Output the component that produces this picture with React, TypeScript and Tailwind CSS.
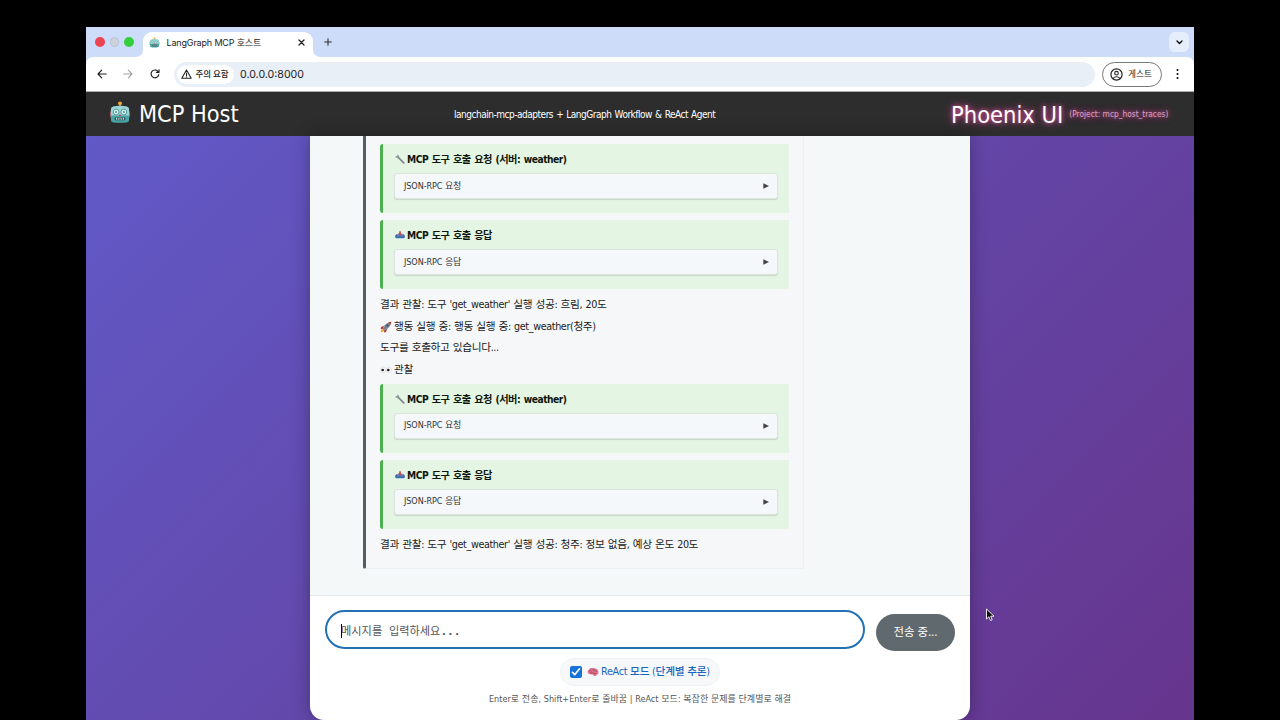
import React from "react";

const stroke = { fill: "none", stroke: "currentColor", strokeLinecap: "round", strokeLinejoin: "round" } as const;

function Robot({ className }: { className: string }) {
  return (
    <svg viewBox="0 0 22 24" className={className}>
      <path d="M11 3v4" stroke="#c49b45" strokeWidth="1.6" />
      <circle cx="11" cy="2.4" r="2" fill="#f0a93c" />
      <rect x="0.5" y="11" width="3" height="6" rx="1.2" fill="#a8525c" />
      <rect x="18.5" y="11" width="3" height="6" rx="1.2" fill="#a8525c" />
      <path d="M3.5 6Q11 4 18.5 6Q20.500 6.500 20.500 9v10.500Q20.500 22 18 22.400Q11 23.200 4 22.400Q1.500 22 1.500 19.500V9Q1.500 6.500 3.500 6Z" fill="#4aa3a4" />
      <path d="M3.500 6Q11 4 18.500 6Q20.500 6.500 20.500 9v6h-19V9Q1.500 6.500 3.500 6Z" fill="#9ad4d3" />
      <circle cx="7" cy="11.500" r="3" fill="#d3f3f1" stroke="#4a8d92" strokeWidth="0.900" />
      <circle cx="15" cy="11.500" r="3" fill="#d3f3f1" stroke="#4a8d92" strokeWidth="0.900" />
      <circle cx="7" cy="11.500" r="1.100" fill="#4b9a9c" />
      <circle cx="15" cy="11.500" r="1.100" fill="#4b9a9c" />
      <path d="M11 13.500l1.300 2.200H9.700Z" fill="#bd3f43" />
      <rect x="5.500" y="17" width="11" height="3" rx="1" fill="#244e55" />
      <path d="M7.500 17.300v2.400M9.800 17.300v2.400M12.200 17.300v2.400M14.500 17.300v2.400" stroke="#dff2ef" strokeWidth="1" />
    </svg>
  );
}

function Wrench() {
  return (
    <svg viewBox="0 0 10 10" className="mb-px size-[10px]">
      <path d="M3.300 3.300L8.700 8.900" stroke="#7f8a8c" strokeWidth="1.700" strokeLinecap="round" />
      <path d="M2.700 0.700L1.900 2.200L0.500 1.900Q0.400 3.800 2.200 4.200Q4.200 4 4.200 2.400Q4 1 2.700 0.700Z" fill="#8d9799" />
    </svg>
  );
}

function Inbox() {
  return (
    <svg viewBox="0 0 10 10" className="mb-px size-[10px]">
      <path d="M1.400 4.200h7.200L9.800 5.600v1.700Q9.800 8.300 8.600 8.300H1.400Q0.200 8.300 0.200 7.300V5.600Z" fill="#3f6fb0" />
      <path d="M1.400 4.500h7.200L7 5.800H3Z" fill="#7399cd" />
      <path d="M4.200 1.200h1.600v2.200h1.500L5 6L2.700 3.400h1.500Z" fill="#c9414c" />
    </svg>
  );
}

function Rocket() {
  return (
    <svg viewBox="0 0 12 12" className="mb-px size-[12px]">
      <path d="M0.800 11.200Q0.900 8.500 3 8l1.200 1.200Q3.500 11 0.800 11.200Z" fill="#f39a32" />
      <path d="M3.800 4.800L1.200 6L0.600 8.200L3 7.800ZM7.200 8L6 11L4 11.500L4.300 9Z" fill="#b8322f" />
      <path d="M2.600 7.800Q4.300 2 11.300 0.700Q10.200 7.600 4.100 9.500Z" fill="#7d8592" />
      <path d="M8.300 1.700Q9.800 0.900 11.300 0.700Q11 2.200 10.300 3.700Z" fill="#c43b35" />
      <circle cx="7.400" cy="4.500" r="1.100" fill="#30465d" />
    </svg>
  );
}

function Eyes() {
  return (
    <svg viewBox="0 0 12 12" className="size-[12px]">
      <ellipse cx="3.100" cy="6" rx="2.400" ry="3" fill="#fff" stroke="#d0cfcf" strokeWidth="0.600" />
      <ellipse cx="8.900" cy="6" rx="2.400" ry="3" fill="#fff" stroke="#d0cfcf" strokeWidth="0.600" />
      <circle cx="2.700" cy="6" r="1.350" fill="#222" />
      <circle cx="8.300" cy="6" r="1.350" fill="#222" />
    </svg>
  );
}

function Brain() {
  return (
    <svg viewBox="0 0 12 12" className="size-[12px]">
      <path d="M0.700 6.600Q0.300 4.400 2 3.400Q3.200 1.800 5.300 2.200Q7.500 1.500 9 2.800Q11.200 3.500 11.400 5.600Q12 8 9.800 8.800Q9 10.300 7.300 9.900Q6.300 9.600 5.700 8.500Q1.500 9 0.700 6.600Z" fill="#d9708c" />
      <path d="M2 5.500Q3.400 3.700 4.600 4.900M5.300 3.300Q7.200 3 7.300 4.700Q9.400 4.500 9.700 6M3 7.200Q5 5.800 6.600 7.200Q8 8 9.300 7.400" fill="none" stroke="#a5395b" strokeWidth="0.700" />
    </svg>
  );
}

function ToolCard({ kind }: { kind: "request" | "response" }) {
  const request = kind === "request";
  return (
    <section className="h-[69px] rounded-l-[3px] border-l-[3px] border-[#4caf50] bg-[#e4f5e3] pt-[8px] pr-[11px] pl-[11px]">
      <div className="flex h-[15px] items-center gap-[2px] pl-px text-[10.200px] font-bold tracking-[-0.480px] text-[#0e160e] [word-spacing:0.800px]">
        {request ? <Wrench /> : <Inbox />}
        <span className="pt-px">{request ? "MCP 도구 호출 요청 (서버: weather)" : "MCP 도구 호출 응답"}</span>
      </div>
      <div className="mt-[6px] flex h-[26px] items-center justify-between rounded-[3px] border border-[#dbe5dd] bg-[#f5f8fa] pr-[8px] pl-[9px] text-[9px] tracking-[-0.080px] text-[#333] shadow-[0_1px_1px_#c8d5c9]">
        <span>{request ? "JSON-RPC 요청" : "JSON-RPC 응답"}</span>
        <svg viewBox="0 0 6 6" className="size-[6px]"><path d="M0.300 0.200L6 3L0.300 5.800Z" fill="#444" /></svg>
      </div>
    </section>
  );
}

function Line({ children }: { children: React.ReactNode }) {
  return <p className="flex h-[21.700px] items-center gap-[2px] whitespace-nowrap text-[10.700px] tracking-[-0.370px] text-[#1a1a1a] [word-spacing:0.600px]">{children}</p>;
}

function TabStrip() {
  return (
    <div className="flex h-[30px] shrink-0 items-end bg-[#cddcf9]">
      <div className="flex h-[30px] items-center gap-[5px] pl-[9px]">
        <i className="size-[9.500px] rounded-full bg-[#ec4453]" />
        <i className="size-[9.500px] rounded-full border border-[#b9c3d2] bg-[#ccd3dd]" />
        <i className="size-[9.500px] rounded-full bg-[#33cf3c]" />
      </div>
      <svg viewBox="0 0 8 8" className="ml-[1.500px] size-[8px]"><path d="M8 0Q8 8 0 8H8Z" fill="#fff" /></svg>
      <div className="flex h-[25px] w-[170px] items-center rounded-t-[9px] bg-white pr-[8px] pb-[4px] pl-[6px] font-['Inter','Noto_Sans_CJK_KR',sans-serif] text-[9px] text-[#222]">
        <Robot className="h-[11px] w-[11px]" />
        <span className="ml-[6.500px] grow whitespace-nowrap tracking-[-0.160px]">LangGraph MCP 호스트</span>
        <svg viewBox="0 0 7 7" className="size-[7px]"><path d="M1 1l5 5M6 1l-5 5" {...stroke} strokeWidth="1.300" /></svg>
      </div>
      <svg viewBox="0 0 8 8" className="size-[8px]"><path d="M0 0Q0 8 8 8H0Z" fill="#fff" /></svg>
      <svg viewBox="0 0 8 8" className="mb-[11px] ml-[3px] size-[8px] text-[#333]"><path d="M4 0.700v6.600M0.700 4h6.600" {...stroke} strokeWidth="1.100" /></svg>
      <div className="mr-[5px] mb-[5px] ml-auto flex size-[20px] items-center justify-center rounded-[6px] bg-[#e6eefb]">
        <svg viewBox="0 0 7 5" className="h-[5px] w-[7px]"><path d="M1 1l2.500 2.500L6 1" {...stroke} strokeWidth="1.300" /></svg>
      </div>
    </div>
  );
}

function Toolbar() {
  return (
    <div className="bg-[#cddcf9]">
      <div className="flex h-[35px] items-center rounded-t-[7px] border-b border-[#aaa] bg-white font-['Inter','Noto_Sans_CJK_KR',sans-serif] text-[#222]">
        <svg viewBox="0 0 10 10" className="ml-[11px] size-[10px]"><path d="M9.200 5H1M4.700 1.200L1 5l3.700 3.800" {...stroke} strokeWidth="1.200" /></svg>
        <svg viewBox="0 0 10 10" className="ml-[16px] size-[10px] text-[#a2a2a2]"><path d="M0.800 5H9M5.300 1.200L9 5L5.300 8.800" {...stroke} strokeWidth="1.100" /></svg>
        <svg viewBox="0 0 10 10" className="ml-[17px] size-[10px]"><path d="M8.800 5.600A3.900 3.900 0 1 1 7.900 2.300L9 3.400M9 0.800V3.400H6.400" {...stroke} strokeWidth="1.200" /></svg>
        <div className="ml-[14px] flex h-[25px] w-[921px] items-center rounded-full bg-[#e9eff7] pl-[3px]">
          <div className="flex h-[19px] w-[57px] items-center justify-center gap-[3px] rounded-full bg-white pr-px text-[8.500px] font-medium">
            <svg viewBox="0 0 11 10" className="h-[10px] w-[11px]"><path d="M5.500 1L10.200 9.200H0.800ZM5.500 4v2.500M5.500 7.800v0.100" {...stroke} strokeWidth="1.100" /></svg>
            <span className="whitespace-nowrap tracking-[-0.100px]">주의 요함</span>
          </div>
          <span className="mt-[2px] ml-[6px] text-[10.600px]">0.0.0.0:8000</span>
        </div>
        <div className="ml-[7px] flex h-[25px] w-[60px] items-center justify-center gap-[5px] rounded-full border border-[#777] pr-[2px] text-[8.700px]">
          <svg viewBox="0 0 13 13" className="size-[13px]">
            <circle cx="6.500" cy="6.500" r="5.600" {...stroke} strokeWidth="1.200" />
            <circle cx="6.500" cy="5.200" r="1.800" {...stroke} strokeWidth="1.100" />
            <path d="M2.900 10.300Q6.500 7.200 10.100 10.300" {...stroke} strokeWidth="1.100" />
          </svg>
          <span>게스트</span>
        </div>
        <svg viewBox="0 0 3 12" className="ml-[14px] h-[12px] w-[3px]"><circle cx="1.500" cy="2" r="1" /><circle cx="1.500" cy="6" r="1" /><circle cx="1.500" cy="10" r="1" /></svg>
      </div>
    </div>
  );
}

export default function App() {
  return (
    <div className="h-[720px] w-[1280px] overflow-hidden bg-black px-[86px] pt-[27px] font-['DejaVu_Sans_Condensed','DejaVu_Sans','Noto_Sans_CJK_KR',sans-serif] font-stretch-condensed leading-none">
      <div className="flex h-[693px] flex-col">
        <TabStrip />
        <Toolbar />
        <header className="flex h-[44px] shrink-0 items-center bg-[#2d2d2d] text-white">
          <Robot className="mb-[4px] ml-[23px] h-[23px] w-[22px]" />
          <h1 className="ml-[8px] w-[315px] whitespace-nowrap pb-px text-[23.300px]">MCP Host</h1>
          <p className="w-[497px] whitespace-nowrap pt-[2px] text-[10px] tracking-[-0.480px] [word-spacing:0.700px]">langchain-mcp-adapters + LangGraph Workflow &amp; ReAct Agent</p>
          <div className="flex items-center whitespace-nowrap pt-[3px] [text-shadow:0_0_4px_#e0559f,0_0_8px_#c0458a]">
            <span className="text-[23.500px]">Phoenix UI</span>
            <span className="ml-[6px] pb-[3px] text-[8.300px] text-[#d9a3c3]">(Project: mcp_host_traces)</span>
          </div>
        </header>
        <main className="flex grow justify-center bg-[linear-gradient(135deg,#6159c7_0%,#6347a9_50%,#66358d_100%)]">
          <div className="flex h-[584px] w-[660px] flex-col overflow-hidden rounded-b-[14px] bg-white shadow-[0_0_18px_rgba(0,0,0,0.300)]">
            <div className="h-[460px] shrink-0 border-b border-[#e4e9ec] bg-[#f4f8f9] pl-[53px]">
              <div className="h-[433px] w-[441px] rounded-bl-[2px] border-r border-b border-l-[3px] border-[#eef1f3] border-l-[#555d61] bg-[#f5f7f9] pt-[8px] pr-[14px] pl-[14px]">
                <div className="flex flex-col gap-[7px]"><ToolCard kind="request" /><ToolCard kind="response" /></div>
                <div className="pt-[5.500px] pb-[2.700px]">
                  <Line>결과 관찰: 도구 'get_weather' 실행 성공: 흐림, 20도</Line>
                  <Line><Rocket />행동 실행 중: 행동 실행 중: get_weather(청주)</Line>
                  <Line>도구를 호출하고 있습니다...</Line>
                  <Line><Eyes />관찰</Line>
                </div>
                <div className="flex flex-col gap-[7px]"><ToolCard kind="request" /><ToolCard kind="response" /></div>
                <div className="pt-[5.500px]"><Line>결과 관찰: 도구 'get_weather' 실행 성공: 청주: 정보 없음, 예상 온도 20도</Line></div>
              </div>
            </div>
            <div className="flex flex-col items-center">
              <div className="flex w-full pt-[14px] pl-[15px]">
                <div className="flex h-[39px] w-[540px] items-center rounded-full border-2 border-[#2371b5] pl-[14px] font-['DejaVu_Sans_Mono','Noto_Sans_CJK_KR',monospace] text-[11.200px] text-[#555]">
                  <i className="mt-[2px] -mr-px h-[14px] w-px bg-black" />
                  <span className="whitespace-pre pt-[4px]">메시지를 입력하세요<b>...</b></span>
                </div>
                <button className="mt-[4px] ml-[11px] h-[37px] w-[79px] rounded-full bg-[#60696d] text-[11.400px] tracking-[-0.100px] text-white">전송 중...</button>
              </div>
              <label className="mt-[7px] flex h-[28px] w-[160px] items-center rounded-full border border-[#f0f1f3] bg-[#f6f8fa] pl-[9px]">
                <span className="flex size-[12px] items-center justify-center rounded-[2px] bg-[#1673dc]">
                  <svg viewBox="0 0 10 10" className="size-[10px] text-white"><path d="M1.500 5.300l2.200 2.400L8.500 1.800" {...stroke} strokeWidth="1.700" /></svg>
                </span>
                <span className="ml-[5px] flex items-center gap-[2px] whitespace-nowrap text-[10.700px] font-medium tracking-[-0.250px] text-[#1b66bd]"><Brain />ReAct 모드 (단계별 추론)</span>
              </label>
              <p className="mt-[9px] whitespace-nowrap text-[9px] tracking-[0.050px] text-[#555]">Enter로 전송, Shift+Enter로 줄바꿈 | ReAct 모드: 복잡한 문제를 단계별로 해결</p>
            </div>
          </div>
        </main>
      </div>
      <svg viewBox="0 0 10 14" className="absolute top-[608px] left-[985px] h-[14px] w-[10px]"><path d="M1.500 1v10l2.400-2.200L5.500 12.500l1.700-0.700L5.700 8.200H9Z" fill="#111" stroke="#fff" strokeWidth="0.900" /></svg>
    </div>
  );
}
